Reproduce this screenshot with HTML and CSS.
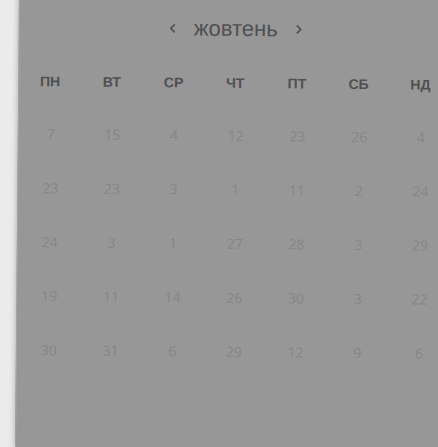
FILE: index.html
```html
<!DOCTYPE html>
<html lang="uk">
<head>
<meta charset="utf-8">
<title>Календар</title>
<link rel="stylesheet" href="styles.css">
</head>
<body>
<main class="calendar">
  <header class="month">
    <button class="nav" type="button" aria-label="Попередній місяць"><svg width="6" height="10" viewBox="0 0 6 10"><path d="M5 1L1 5l4 4"/></svg></button>
    <h1 class="name">жовтень</h1>
    <button class="nav" type="button" aria-label="Наступний місяць"><svg width="6" height="10" viewBox="0 0 6 10"><path d="M1 1l4 4-4 4"/></svg></button>
  </header>
  <table class="days">
    <thead>
      <tr><th scope="col">ПН</th><th scope="col">ВТ</th><th scope="col">СР</th><th scope="col">ЧТ</th><th scope="col">ПТ</th><th scope="col">СБ</th><th scope="col">НД</th></tr>
    </thead>
    <tbody>
      <tr><td>7</td><td>15</td><td>4</td><td>12</td><td>23</td><td>26</td><td>4</td></tr>
      <tr><td>23</td><td>23</td><td>3</td><td>1</td><td>11</td><td>2</td><td>24</td></tr>
      <tr><td>24</td><td>3</td><td>1</td><td>27</td><td>28</td><td>3</td><td>29</td></tr>
      <tr><td>19</td><td>11</td><td>14</td><td>26</td><td>30</td><td>3</td><td>22</td></tr>
      <tr><td>30</td><td>31</td><td>6</td><td>29</td><td>12</td><td>9</td><td>6</td></tr>
    </tbody>
  </table>
</main>
</body>
</html>
```

FILE: styles.css
```css
* { box-sizing: border-box; }

html {
  overflow: hidden;
  background: #ebebeb;
}

body {
  margin: 0;
  height: 100vh;
  overflow: hidden;
  font-family: "Liberation Sans", Arial, sans-serif;
  color: #505050;
}

/* The sheet is slightly tilted and runs past the window's edges. */
.calendar {
  display: flow-root;
  min-height: calc(100vh + 21px);
  margin: -20px -14px 0 19px;
  padding-top: 33px;
  background: #979797;
  border-left: 1px solid #a4a4a4;
  box-shadow: 0 0 6px rgba(0, 0, 0, 0.3);
  transform: rotate(0.5deg);
  transform-origin: 0 20px;
}

.month {
  display: flex;
  justify-content: center;
  align-items: center;
  gap: 14px;
  height: 28px;
}

.name {
  margin: 0;
  font-size: 22px;
  font-weight: 400;
  line-height: 28px;
}

.nav {
  display: flex;
  margin: 0;
  padding: 4px;
  border: 0;
  background: none;
  color: inherit;
}

.nav svg {
  fill: none;
  stroke: currentColor;
  stroke-width: 1.6;
}

.days {
  width: 100%;
  margin-top: 14px;
  table-layout: fixed;
  border-collapse: collapse;
}

.days th,
.days td {
  height: 54px;
  padding: 0;
  text-align: center;
  vertical-align: middle;
  font-size: 14px;
  line-height: 20px;
}

.days th {
  height: 52px;
  font-weight: 700;
}

.days td {
  padding-left: 2px;
  font-family: "Open Sans", "Noto Sans", sans-serif;
  color: #868686;
}
```
